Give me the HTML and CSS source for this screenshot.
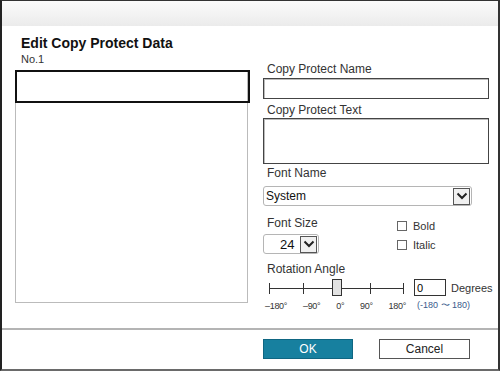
FILE: index.html
```html
<!DOCTYPE html>
<html lang="en">
  <head>
    <meta charset="UTF-8" />
    <meta name="viewport" content="width=device-width, initial-scale=1.0" />
    <title>Edit Copy Protect Data</title>
    <link rel="stylesheet" href="styles.css">
  </head>
  <body>
    <div class="dialog">
      <div class="dialog-header"></div>

      <div class="dialog-body">
        <div class="left-col">
          <h2 class="title">Edit Copy Protect Data</h2>
          <div class="subtitle">No.1</div>
          <div class="data-list">
            <div class="data-item selected"></div>
          </div>
        </div>

        <div class="right-col">
          <label class="field-label" for="cp-name">Copy Protect Name</label>
          <input type="text" id="cp-name" class="text-input" />

          <label class="field-label gap-4" for="cp-text">Copy Protect Text</label>
          <textarea id="cp-text" class="text-area"></textarea>

          <div class="field-label gap-2">Font Name</div>
          <div class="select font-select">
            <span class="select-value">System</span>
            <span class="select-arrow">
              <svg width="12" height="8" viewBox="0 0 12 8"><path d="M1.5 1.5 L6 6 L10.5 1.5" fill="none" stroke="#222" stroke-width="2"/></svg>
            </span>
          </div>

          <div class="size-row">
            <div class="size-col">
              <div class="field-label">Font Size</div>
              <div class="select size-select">
                <span class="select-value">24</span>
                <span class="select-arrow">
                  <svg width="12" height="8" viewBox="0 0 12 8"><path d="M1.5 1.5 L6 6 L10.5 1.5" fill="none" stroke="#222" stroke-width="2"/></svg>
                </span>
              </div>
            </div>
            <div class="check-col">
              <div class="check-row"><span class="check-box"></span>Bold</div>
              <div class="check-row"><span class="check-box"></span>Italic</div>
            </div>
          </div>

          <div class="field-label rot-label">Rotation Angle</div>
          <div class="angle-row">
            <div class="slider-wrap">
              <div class="slider">
                <div class="ticks">
                  <span class="tick"></span>
                  <span class="tick"></span>
                  <span class="tick"></span>
                  <span class="tick"></span>
                  <span class="tick"></span>
                </div>
                <div class="thumb"></div>
              </div>
              <div class="tick-labels">
                <span>&ndash;180&deg;</span>
                <span>&ndash;90&deg;</span>
                <span>0&deg;</span>
                <span>90&deg;</span>
                <span>180&deg;</span>
              </div>
            </div>
            <div class="angle-col">
              <div class="angle-input-row">
                <input type="text" class="angle-input" value="0" />
                <span class="angle-unit">Degrees</span>
              </div>
              <div class="angle-range">(-180 &#12316; 180)</div>
            </div>
          </div>
        </div>
      </div>

      <div class="dialog-footer">
        <button class="btn btn-ok">OK</button>
        <button class="btn btn-cancel">Cancel</button>
      </div>
    </div>
  </body>
</html>
```

FILE: styles.css
```css
* {
    box-sizing: border-box;
}

body {
    margin: 0;
    font-family: 'Liberation Sans', Arial, sans-serif;
    color: #222;
    background-color: #fff;
}

.dialog {
    width: 500px;
    height: 371px;
    border-top: 1px solid #333;
    border-left: 2px solid #222;
    border-right: 2px solid #333;
    border-bottom: 2px solid #6a6a6a;
    background-color: #fff;
}

.dialog-header {
    height: 25px;
    background: linear-gradient(#fbfbfb, #ebebeb);
}

.dialog-body {
    display: flex;
    height: 302px;
    padding-left: 13px;
}

.left-col {
    width: 233px;
}

.title {
    margin: 9px 0 0 6px;
    font-size: 14px;
    line-height: 16px;
    font-weight: bold;
    color: #111;
}

.subtitle {
    margin: 1px 0 0 6px;
    font-size: 11px;
    line-height: 14px;
    color: #333;
}

.data-list {
    margin-top: 4px;
    height: 233px;
    border: 1px solid #bbb;
}

.data-item {
    height: 33px;
}

.data-item.selected {
    margin: -1px -3px 0 -1px;
    border: 2px solid #111;
}

.right-col {
    width: 226px;
    margin-left: 15px;
    padding-top: 36px;
}

.field-label {
    display: block;
    padding-left: 4px;
    font-size: 12px;
    line-height: 14px;
    color: #333;
}

.gap-4 {
    margin-top: 4px;
}

.gap-2 {
    margin-top: 2px;
}

.text-input, .text-area {
    display: block;
    width: 226px;
    margin: 2px 0 0;
    padding: 0 3px;
    border: 1px solid #444;
    box-shadow: inset 1px 1px 0 #bbb;
    font-family: inherit;
    font-size: 12px;
    background-color: #fff;
}

.text-input {
    height: 21px;
}

.text-area {
    height: 46px;
    margin-top: 1px;
    resize: none;
}

.select {
    display: flex;
    align-items: center;
    height: 20px;
    border: 1px solid #b5b5b5;
    border-radius: 3px;
    background-color: #fff;
    font-size: 12px;
    color: #111;
}

.select-value {
    flex: 1;
}

.select-arrow {
    display: flex;
    align-items: center;
    justify-content: center;
    width: 17px;
    height: 17px;
    margin-right: 1px;
    border: 1px solid #555;
    background-color: #f0f0f0;
}

.font-select {
    width: 209px;
    margin-top: 6px;
    padding-left: 2px;
}

.size-row {
    display: flex;
    margin-top: 10px;
}

.size-col {
    width: 134px;
}

.size-select {
    width: 56px;
    margin-top: 4px;
    padding-left: 16px;
    font-size: 13px;
}

.check-row {
    display: flex;
    align-items: center;
    height: 19px;
    font-size: 11px;
    color: #333;
}

.check-box {
    width: 10px;
    height: 10px;
    margin-right: 6px;
    border: 1px solid #666;
    background-color: #fff;
}

.rot-label {
    margin-top: 8px;
}

.angle-row {
    display: flex;
    margin-top: 3px;
}

.slider-wrap {
    flex: none;
    width: 147px;
}

.slider {
    position: relative;
    width: 135px;
    height: 18px;
    margin-left: 6px;
}

.ticks {
    display: flex;
    justify-content: space-between;
    align-items: center;
    height: 100%;
    background: linear-gradient(#333, #333) center / 100% 1px no-repeat;
}

.tick {
    width: 1px;
    height: 11px;
    background-color: #333;
}

.thumb {
    position: absolute;
    left: 63px;
    top: 0;
    width: 10px;
    height: 17px;
    border: 1px solid #333;
    background-color: #e2e2e2;
}

.tick-labels {
    display: flex;
    justify-content: space-between;
    margin: 4px 4px 0 2px;
    font-size: 9px;
    line-height: 10px;
    letter-spacing: -0.3px;
    color: #333;
}

.angle-col {
    flex: none;
    margin-left: 4px;
}

.angle-input-row {
    display: flex;
    align-items: center;
}

.angle-input {
    width: 32px;
    height: 17px;
    padding: 0 2px;
    border: 1px solid #333;
    font-family: inherit;
    font-size: 11px;
}

.angle-unit {
    margin-left: 5px;
    font-size: 11px;
    color: #333;
}

.angle-range {
    margin: 4px 0 0 3px;
    font-size: 9px;
    line-height: 11px;
    color: #3a5a8c;
}

.dialog-footer {
    display: flex;
    height: 41px;
    padding: 9px 0 0 261px;
    border-top: 2px solid #b4b4b4;
}

.btn {
    height: 20px;
    padding: 0;
    font-family: inherit;
    font-size: 12px;
    cursor: pointer;
}

.btn-ok {
    width: 90px;
    border: 1px solid #0f6682;
    background-color: #17809f;
    color: #fff;
}

.btn-cancel {
    width: 91px;
    margin-left: 26px;
    border: 1px solid #555;
    background-color: #fff;
    color: #222;
}
```
